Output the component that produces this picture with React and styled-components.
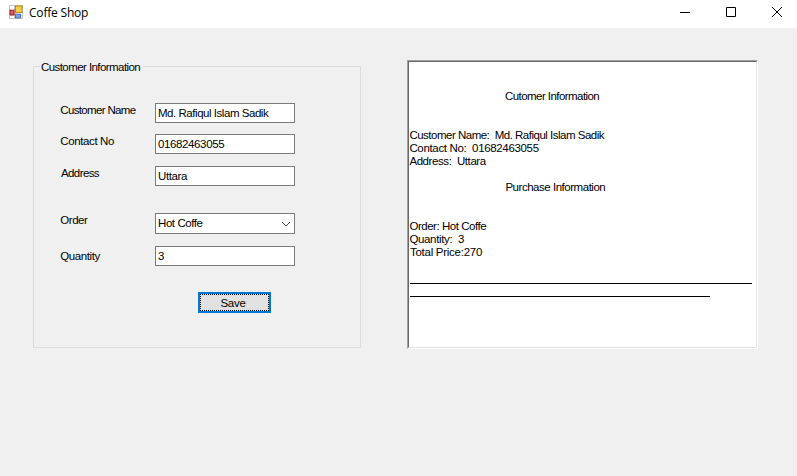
import React from "react";
import styled, { createGlobalStyle } from "styled-components";

const GlobalStyle = createGlobalStyle`
  * { box-sizing: border-box; }
  body { margin: 0; background: #f0f0f0; overflow: hidden; }
`;

const Window = styled.div`
  width: 797px;
  height: 476px;
  background: #f0f0f0;
  font: 11.5px/13px "Liberation Sans", sans-serif;
  color: #000;
  display: flex;
  flex-direction: column;
`;

const TitleBar = styled.header`
  height: 28px;
  flex: none;
  background: #fff;
  display: flex;
  align-items: flex-start;
  padding-left: 9px;
`;

const AppIcon = styled.svg`
  width: 14px;
  height: 14px;
  margin-top: 5px;
  flex: none;
`;

const Title = styled.div`
  flex: 1;
  margin: 5px 0 0 6px;
  font: 12px/16px "Open Sans", sans-serif;
  letter-spacing: -0.2px;
`;

const Controls = styled.div`
  display: flex;
  gap: 34px;
  padding: 6px 14px 0 0;
`;

const ControlIcon = styled.svg`
  width: 12px;
  height: 12px;
  fill: none;
  stroke: #000;
`;

const Client = styled.main`
  flex: 1;
  display: flex;
  align-items: flex-start;
  gap: 46px;
  padding: 32px 0 0 33px;
`;

const GroupBox = styled.fieldset`
  width: 328px;
  height: 288px;
  margin: 0;
  padding: 30px 0 0 26px;
  border: 1px solid #dcdcdc;
  border-radius: 0;
  min-width: 0;
`;

const Legend = styled.legend`
  height: 13px;
  margin-left: -20px;
  padding: 1px 3px 0 1px;
  letter-spacing: -0.57px;
`;

const Row = styled.div`
  display: grid;
  grid-template-columns: 95px 140px;
  align-items: start;
  margin-top: ${(p) => p.$gap || 0}px;
`;

const Label = styled.label`
  padding-top: ${(p) => p.$top || 1}px;
  padding-left: ${(p) => p.$indent || 0.3}px;
  letter-spacing: ${(p) => p.$track || 0}px;
`;

const Field = styled.div`
  height: ${(p) => p.$height || 20}px;
  border: 1px solid #7a7a7a;
  background: #fff;
  padding: 3px 3px 0 2px;
  display: flex;
  justify-content: space-between;
  white-space: pre;
  letter-spacing: ${(p) => p.$track || 0}px;
`;

const Chevron = styled.svg`
  width: 10px;
  height: 6px;
  margin-top: 4px;
  fill: none;
  stroke: #444;
`;

const SaveButton = styled.button`
  display: block;
  width: 73px;
  height: 21px;
  margin: 26px 0 0 138px;
  padding: 1px 3px 0 0;
  border: 2px solid #0078d7;
  background: #e1e1e1;
  outline: 1px dotted #000;
  outline-offset: -3px;
  font: inherit;
  color: #000;
  letter-spacing: -0.3px;
`;

const RichText = styled.section`
  width: 351px;
  height: 289px;
  background: #fff;
  border: 1px solid;
  border-color: #a0a0a0 #fff #fff #a0a0a0;
`;

const RichInner = styled.div`
  height: 100%;
  border: 1px solid;
  border-color: #696969 #e3e3e3 #e3e3e3 #696969;
  padding: 28px 0 0 0;
`;

const Line = styled.div`
  height: 13px;
  margin-top: ${(p) => p.$gap || 0}px;
  padding-left: ${(p) => p.$indent || 0.4}px;
  white-space: pre;
  letter-spacing: ${(p) => p.$track || 0}px;
`;

const Rule = styled.hr`
  width: ${(p) => p.$width}px;
  height: 1px;
  margin: ${(p) => p.$gap}px 0 0 1px;
  border: 0;
  background: #000;
`;

const fields = [
  { label: "Customer Name", value: "Md. Rafiqul Islam Sadik", lt: -0.66, vt: -0.46 },
  { label: "Contact No", value: "01682463055", gap: 11, lt: -0.38, vt: -0.38 },
  { label: "Address", value: "Uttara", gap: 12, lt: -0.6, vt: -0.4, indent: 1 },
  { label: "Order", value: "Hot Coffe", gap: 27, lt: -0.45, vt: -0.42, height: 21, select: true },
  { label: "Quantity", value: "3", gap: 12, lt: -0.42, top: 4 },
];

const receipt = [
  { text: "Cutomer Information", indent: 96, track: -0.56 },
  { text: "Customer Name:  Md. Rafiqul Islam Sadik", gap: 26, track: -0.5 },
  { text: "Contact No:  01682463055", track: -0.34 },
  { text: "Address:  Uttara", track: -0.42 },
  { text: "Purchase Information", gap: 13, indent: 96.4, track: -0.47 },
  { text: "Order: Hot Coffe", gap: 26, track: -0.46 },
  { text: "Quantity:  3", track: -0.34 },
  { text: "Total Price:270", indent: 1, track: -0.27 },
];

export default function App() {
  return (
    <Window>
      <GlobalStyle />
      <TitleBar>
        <AppIcon viewBox="0 0 14 14">
          <rect x=".5" y=".5" width="13" height="13" fill="#fff" stroke="#c4c4c4" />
          <path d="M5.5 0v14M0 10.5h14" stroke="#c4c4c4" />
          <rect x="6.5" y="1" width="6.5" height="6.5" fill="#f6cf45" stroke="#b58a16" />
          <rect x="1" y="5.2" width="4" height="4.6" fill="#e35b5b" stroke="#a01c22" />
          <rect x="6.5" y="9.2" width="5" height="3.6" fill="#7da3ee" stroke="#456fc4" />
        </AppIcon>
        <Title>Coffe Shop</Title>
        <Controls>
          <ControlIcon viewBox="0 0 12 12"><path d="M1 6.5h10" /></ControlIcon>
          <ControlIcon viewBox="0 0 12 12"><path d="M1.5 1.5h9v9h-9z" /></ControlIcon>
          <ControlIcon viewBox="0 0 12 12"><path d="M1 1l10 10M11 1L1 11" /></ControlIcon>
        </Controls>
      </TitleBar>
      <Client>
        <GroupBox>
          <Legend>Customer Information</Legend>
          {fields.map((f) => (
            <Row key={f.label} $gap={f.gap}>
              <Label $track={f.lt} $top={f.top} $indent={f.indent}>{f.label}</Label>
              <Field $track={f.vt} $height={f.height}>
                {f.value}
                {f.select && (
                  <Chevron viewBox="0 0 10 6"><path d="M1 1l4 4 4-4" /></Chevron>
                )}
              </Field>
            </Row>
          ))}
          <SaveButton type="button">Save</SaveButton>
        </GroupBox>
        <RichText>
          <RichInner>
            {receipt.map((l) => (
              <Line key={l.text} $gap={l.gap} $indent={l.indent} $track={l.track}>{l.text}</Line>
            ))}
            <Rule $width={342} $gap={24} />
            <Rule $width={300} $gap={12} />
          </RichInner>
        </RichText>
      </Client>
    </Window>
  );
}
